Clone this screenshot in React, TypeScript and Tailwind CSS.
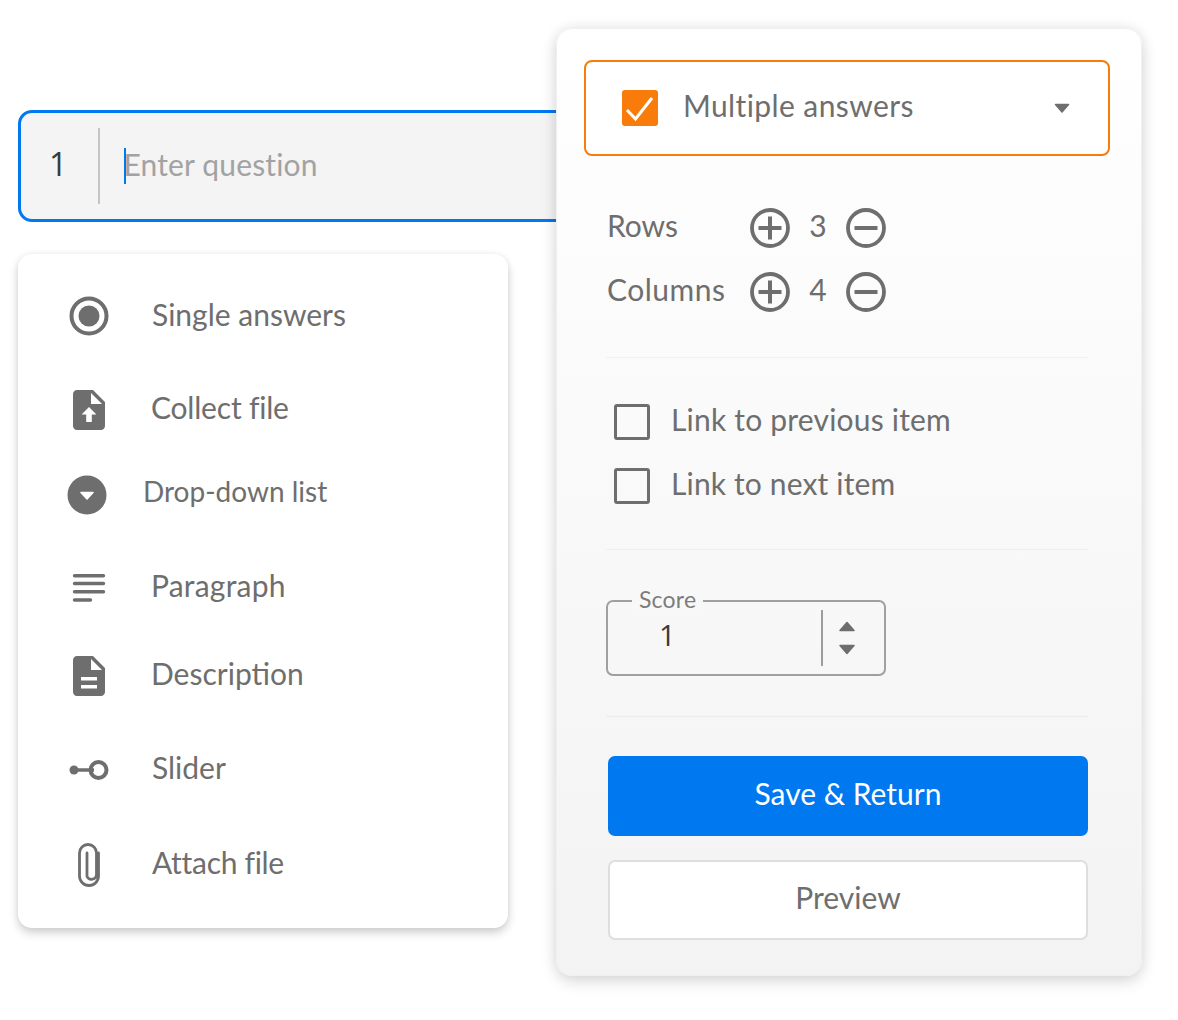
const font = "font-['Lato','Liberation_Sans',sans-serif]";
const FILE = "M14 2H6c-1.1 0-1.99.9-1.99 2L4 20c0 1.1.89 2 1.99 2H18c1.1 0 2-.9 2-2V8l-6-6z";

function RadioIcon() {
  return (
    <svg width="40" height="40" viewBox="0 0 40 40">
      <circle cx="20" cy="20" r="17.5" fill="none" stroke="#6e6e6e" strokeWidth="4" />
      <circle cx="20" cy="20" r="10.5" fill="#6e6e6e" />
    </svg>
  );
}
function UploadFileIcon() {
  return (
    <svg width="32" height="40" viewBox="4 2 16 20">
      <path d={FILE} fill="#6e6e6e" />
      <path d="M13 9V3.5L18.5 9H13z" fill="#fff" />
      <path d="M12 10.5l3.7 3.7h-2.3V18h-2.8v-3.8H8.3z" fill="#fff" />
    </svg>
  );
}
function DropIcon() {
  return (
    <svg width="40" height="40" viewBox="0 0 40 40">
      <circle cx="20" cy="20" r="19.5" fill="#6e6e6e" />
      <path d="M14 17.5h12L20 24Z" fill="#fff" stroke="#fff" strokeWidth="1.5" strokeLinejoin="round" />
    </svg>
  );
}
function ParagraphIcon() {
  return (
    <svg width="40" height="40" viewBox="0 0 40 40">
      <g stroke="#6e6e6e" strokeWidth="3.4" strokeLinecap="round">
        <path d="M5.5 9.7h29M5.5 17.5h29M5.5 25.7h29M5.5 34h16" />
      </g>
    </svg>
  );
}
function DescIcon() {
  return (
    <svg width="32" height="40" viewBox="4 2 16 20">
      <path d={FILE} fill="#6e6e6e" />
      <path d="M13 9V3.5L18.5 9H13z" fill="#fff" />
      <path d="M8 12.5h8v1.7H8zM8 16.5h8v1.7H8z" fill="#fff" />
    </svg>
  );
}
function SliderIcon() {
  return (
    <svg width="40" height="22" viewBox="0 0 40 22">
      <circle cx="5" cy="11" r="4.5" fill="#6e6e6e" />
      <path d="M5 11h20" stroke="#6e6e6e" strokeWidth="3.5" />
      <circle cx="29.5" cy="11" r="8" fill="none" stroke="#6e6e6e" strokeWidth="4" />
    </svg>
  );
}
function ClipIcon() {
  return (
    <svg width="26" height="46" viewBox="0 0 26 46">
      <path
        d="M22.5 11v23a9.5 9.5 0 0 1-19 0V11a8.5 8.5 0 0 1 17 0v21.5a5 5 0 0 1-9.5 2V11"
        fill="none"
        stroke="#6e6e6e"
        strokeWidth="2.8"
        strokeLinecap="round"
      />
    </svg>
  );
}
function CircleBtn({ minus }: { minus?: boolean }) {
  return (
    <svg width="40" height="40" viewBox="0 0 40 40">
      <circle cx="20" cy="20" r="18" fill="none" stroke="#6e6e6e" strokeWidth="3.8" />
      <path d={minus ? "M8.5 20h23" : "M8.5 20h23M20 8.5v23"} stroke="#6e6e6e" strokeWidth="4" />
    </svg>
  );
}

function Row({ className, text, textClass, children }: { className: string; text: string; textClass: string; children: React.ReactNode }) {
  return (
    <div className={`flex items-center ${className}`}>
      <div className="flex w-[40px] shrink-0 items-center justify-center">{children}</div>
      <span className={`text-[#6e6e6e] ${textClass}`}>{text}</span>
    </div>
  );
}

export default function App() {
  return (
    <div className={`${font} relative flex h-[1020px] w-[1178px] overflow-hidden bg-white text-[30px] leading-[40px]`}>
      <div className="ml-[18px] flex w-[490px] shrink-0 flex-col pt-[110px]">
        <div className="flex h-[112px] w-[600px] items-center rounded-l-[14px] border-[3px] border-[#0078f0] bg-[#f4f4f4]">
          <span className="ml-[28px] -mt-[4px] w-[49px] font-['Open_Sans',sans-serif] text-[32px] text-[#3a3a3a]">1</span>
          <div className="h-[76px] w-[1.5px] bg-[#c4c4c4]" />
          <div className="ml-[24px] h-[36px] w-[2px] bg-[#0078f0]" />
          <span className="-ml-[2px] -mt-[4px] tracking-[0.15px] text-[#a2a2a2]">Enter question</span>
        </div>
        <div className="mt-[32px] h-[674px] w-[490px] rounded-[14px] bg-white pt-[42px] pl-[51px] shadow-[0_5px_10px_rgba(0,0,0,0.18),0_0_6px_rgba(0,0,0,0.06)]">
          <Row className="h-[40px]" text="Single answers" textClass="ml-[43px] -mt-[5px]"><RadioIcon /></Row>
          <Row className="mt-[54px] h-[40px]" text="Collect file" textClass="ml-[42px] -mt-[6px] tracking-[-0.2px]"><UploadFileIcon /></Row>
          <Row className="mt-[45px] h-[40px]" text="Drop-down list" textClass="ml-[34px] -mt-[8px] text-[28px]"><div className="-ml-[5px]"><DropIcon /></div></Row>
          <Row className="mt-[51px] h-[40px]" text="Paragraph" textClass="ml-[42px] -mt-[2px] tracking-[0.2px]"><ParagraphIcon /></Row>
          <Row className="mt-[50px] h-[40px]" text="Description" textClass="ml-[42px] -mt-[6px]"><DescIcon /></Row>
          <Row className="mt-[54px] h-[40px]" text="Slider" textClass="ml-[43px] -mt-[6px]"><SliderIcon /></Row>
          <Row className="mt-[55px] h-[40px]" text="Attach file" textClass="ml-[43px] -mt-[6px] tracking-[-0.3px]"><ClipIcon /></Row>
        </div>
      </div>

      <div className="relative z-10 mt-[28px] ml-[48px] h-[948px] w-[586px] shrink-0 rounded-[16px] border border-[#f0f0f0] bg-gradient-to-b from-white to-[#f3f3f3] pt-[31px] pl-[27px] shadow-[0_6px_16px_rgba(0,0,0,0.12),0_0_14px_rgba(0,0,0,0.08)]">
        <div className="flex h-[96px] w-[526px] items-center rounded-[8px] border-2 border-[#f97c0a] bg-white pl-[36px]">
          <svg width="36" height="36" viewBox="0 0 36 36">
            <rect width="36" height="36" rx="3" fill="#f97c0a" />
            <path d="M5 20l8.5 9L30 8" fill="none" stroke="#fff" strokeWidth="3" />
          </svg>
          <span className="ml-[25px] -mt-[6px] tracking-[0.4px] text-[#6e6e6e]">Multiple answers</span>
          <svg className="ml-auto mr-[38px]" width="16" height="10" viewBox="0 0 16 10">
            <path d="M1.5 1.5h13L8 9Z" fill="#6e6e6e" stroke="#6e6e6e" strokeWidth="1.5" strokeLinejoin="round" />
          </svg>
        </div>

        <div className="ml-[24px] w-[482px]">
          <div className="mt-[52px] flex h-[40px] items-center">
            <span className="-ml-[1px] -mt-[6px] w-[143px] text-[#6e6e6e]">Rows</span>
            <CircleBtn />
            <span className="w-[56px] -mt-[6px] text-center text-[#6e6e6e]">3</span>
            <CircleBtn minus />
          </div>
          <div className="mt-[24px] flex h-[40px] items-center">
            <span className="-ml-[1px] -mt-[6px] w-[143px] tracking-[0.5px] text-[#6e6e6e]">Columns</span>
            <CircleBtn />
            <span className="w-[56px] -mt-[6px] text-center text-[#6e6e6e]">4</span>
            <CircleBtn minus />
          </div>
          <div className="-ml-[2px] mt-[45px] h-px w-[482px] bg-[#f1f1f1]" />

          <div className="mt-[46px] flex h-[36px] items-center pl-[6px]">
            <div className="h-[36px] w-[36px] rounded-[3px] border-[3.5px] border-[#6e6e6e]" />
            <span className="ml-[21px] -mt-[6px] tracking-[0.2px] text-[#6e6e6e]">Link to previous item</span>
          </div>
          <div className="mt-[28px] flex h-[36px] items-center pl-[6px]">
            <div className="h-[36px] w-[36px] rounded-[3px] border-[3.5px] border-[#6e6e6e]" />
            <span className="ml-[21px] -mt-[6px] tracking-[0.15px] text-[#6e6e6e]">Link to next item</span>
          </div>
          <div className="-ml-[2px] mt-[45px] h-px w-[482px] bg-[#efefef]" />

          <div className="relative -ml-[2px] mt-[50px] flex h-[76px] w-[280px] items-center rounded-[7px] border-2 border-[#a0a0a0] pl-[54px]">
            <span className="absolute -top-[17px] left-[24px] bg-[#f8f8f8] px-[7px] text-[23px] leading-[28px] tracking-[0.2px] text-[#7c7c7c]">Score</span>
            <span className="-ml-[3px] w-[162px] -mt-[6px] font-['Open_Sans',sans-serif] text-[29px] text-[#3a3a3a]">1</span>
            <div className="h-[56px] w-[1.5px] bg-[#9c9c9c]" />
            <div className="ml-[15px] flex flex-col gap-[12px]">
              <svg width="18" height="11" viewBox="0 0 18 11"><path d="M2 9.5h14L9 1.5Z" fill="#6e6e6e" stroke="#6e6e6e" strokeWidth="1.5" strokeLinejoin="round" /></svg>
              <svg width="18" height="11" viewBox="0 0 18 11"><path d="M2 1.5h14L9 9.5Z" fill="#6e6e6e" stroke="#6e6e6e" strokeWidth="1.5" strokeLinejoin="round" /></svg>
            </div>
          </div>
          <div className="-ml-[2px] mt-[40px] h-px w-[482px] bg-[#ececec]" />

          <div className="mt-[39px] flex h-[80px] w-[480px] items-center justify-center rounded-[7px] bg-[#0078f0] pb-[7px] text-white">Save &amp; Return</div>
          <div className="mt-[24px] flex h-[80px] w-[480px] items-center justify-center rounded-[7px] border-2 border-[#dedede] bg-white pb-[7px] text-[#6e6e6e]">Preview</div>
        </div>
      </div>
    </div>
  );
}
